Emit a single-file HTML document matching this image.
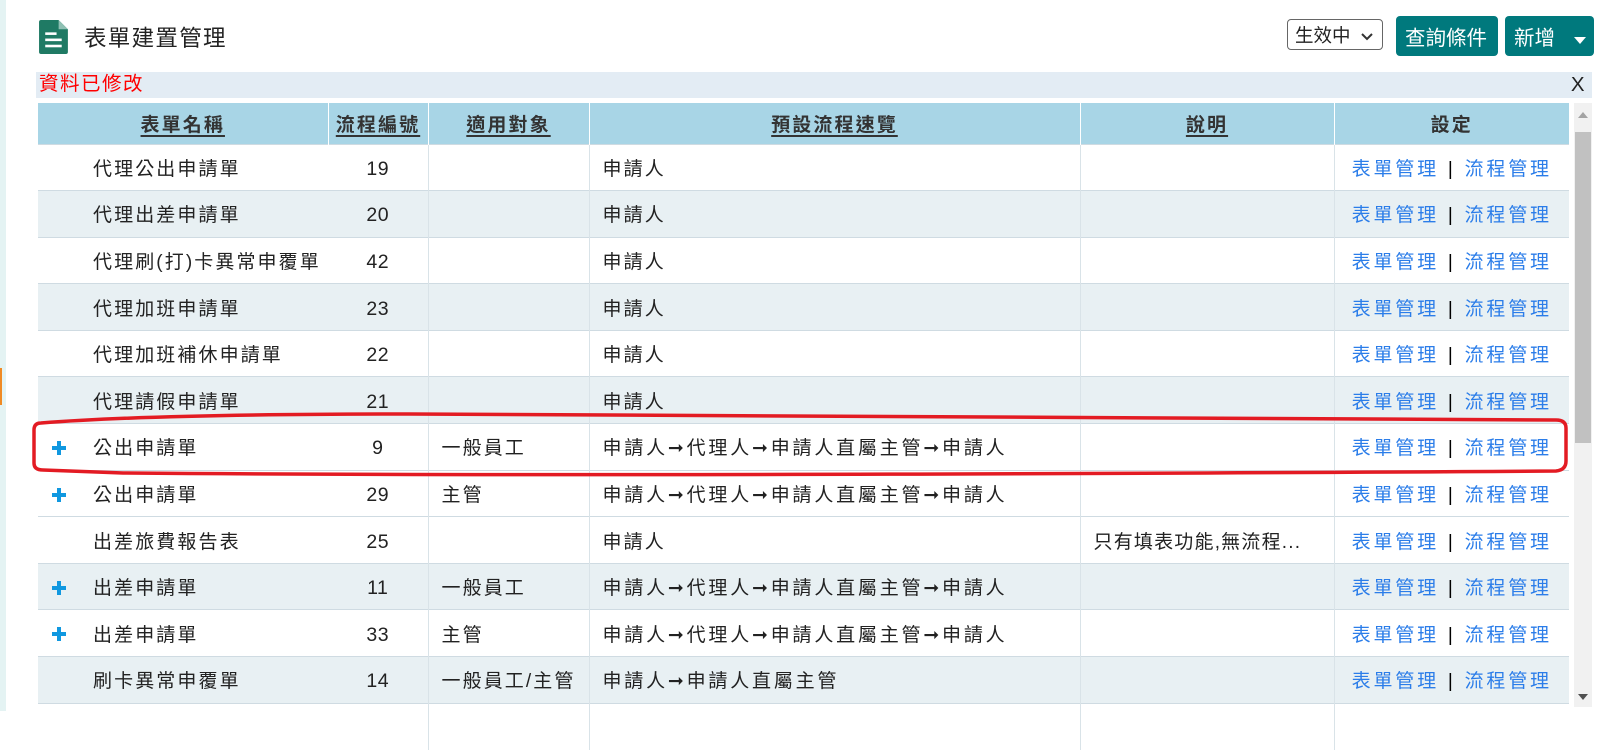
<!DOCTYPE html>
<html><head><meta charset="utf-8"><style>
*{box-sizing:border-box;margin:0;padding:0}
body{width:1605px;height:711px;overflow:hidden;background:#fff;font-family:"Liberation Sans","Noto Sans CJK TC",sans-serif;color:#222;position:relative}
.lstrip{position:absolute;left:0;top:0;width:6px;height:711px;background:#e4f3f3}
.orange{position:absolute;left:0;top:368px;width:2px;height:37px;background:#f08a24}
.title{position:absolute;left:84px;top:21px;font-size:22.5px;color:#222;letter-spacing:1.3px}
.sel{position:absolute;left:1287px;top:19px;width:96px;height:31px;border:1px solid #666;border-radius:4px;font-size:18.5px;padding:2px 0 0 7px;color:#222}
.btn{position:absolute;top:16px;height:40px;background:#00797d;color:#fff;border-radius:4px;font-size:20.5px;padding:5px 0 0 9px}
.alert{position:absolute;left:36px;top:72px;width:1556px;height:26px;background:#e3ecf4;color:#f00;font-size:19.5px;line-height:25px;padding-left:3px;letter-spacing:1.5px}
.alert span{position:absolute;right:6px;top:0;color:#222;font-size:20.5px}
table{position:absolute;left:38px;top:103px;width:1531px;border-collapse:collapse;font-size:19px;letter-spacing:2.1px;table-layout:fixed}
th{background:#a8d5e6;height:41px;font-weight:bold;color:#333;font-size:19px;border-right:1px solid #fff;white-space:nowrap;overflow:hidden}
th u{text-decoration:underline;text-decoration-thickness:2px;text-underline-offset:4px}
td{height:46.6px;border-top:1px solid #cfdbe2;border-right:1px solid #d9e3e8;padding:0 13px;white-space:nowrap;overflow:hidden}
tr.g td{background:#e8f0f3}
td.n{text-align:center;padding:4px 0 0;letter-spacing:0.5px;font-size:19.5px}
td.w{letter-spacing:2.8px}
td.f{border-right:none;padding-left:55px;position:relative}
td.f svg{position:absolute;left:14px;top:17px}
td.s{text-align:center;color:#2b7de9;border-right:none;padding:0;letter-spacing:2.8px}
td.s i{font-style:normal;color:#000;margin:0 9px}
.sb{position:absolute;left:1574px;top:103px;width:18px;height:604px;background:#f1f1f1}
.sb .th{position:absolute;left:1px;top:29px;width:16px;height:311px;background:#c1c1c1}
</style></head><body>
<div class="lstrip"></div><div class="orange"></div>
<svg style="position:absolute;left:39px;top:20px" width="31" height="34" viewBox="0 0 30 33"><path d="M0 2Q0 0 2 0H19L28 9V31Q28 33 26 33H2Q0 33 0 31Z" fill="#1f7a64"/><path d="M19 0V9H28" fill="#8fc0b3"/><rect x="6" y="12" width="11" height="2.5" fill="#fff"/><rect x="6" y="18" width="16" height="2.5" fill="#fff"/><rect x="6" y="24" width="16" height="2.5" fill="#fff"/></svg>
<div class="title">表單建置管理</div>
<div class="sel">生效中 <svg width="14" height="10" style="margin-left:4px"><path d="M2 2L7 7L12 2" stroke="#333" stroke-width="2" fill="none"/></svg></div>
<div class="btn" style="left:1396px;width:102px">查詢條件</div>
<div class="btn" style="left:1505px;width:89px">新增 <svg width="14" height="10" style="margin-left:12px"><path d="M1 2H13L7 9Z" fill="#fff"/></svg></div>
<div class="alert">資料已修改<span>X</span></div>
<table>
<colgroup><col style="width:290px"><col style="width:100px"><col style="width:161px"><col style="width:491px"><col style="width:254px"><col style="width:235px"></colgroup>
<tr><th><u>表單名稱</u></th><th><u>流程編號</u></th><th><u>適用對象</u></th><th><u>預設流程速覽</u></th><th><u>說明</u></th><th style="border-right:none">設定</th></tr>
<tr><td class="f">代理公出申請單</td><td class="n">19</td><td></td><td>申請人</td><td></td><td class="s">表單管理<i>|</i>流程管理</td></tr>
<tr class="g"><td class="f">代理出差申請單</td><td class="n">20</td><td></td><td>申請人</td><td></td><td class="s">表單管理<i>|</i>流程管理</td></tr>
<tr><td class="f">代理刷(打)卡異常申覆單</td><td class="n">42</td><td></td><td>申請人</td><td></td><td class="s">表單管理<i>|</i>流程管理</td></tr>
<tr class="g"><td class="f">代理加班申請單</td><td class="n">23</td><td></td><td>申請人</td><td></td><td class="s">表單管理<i>|</i>流程管理</td></tr>
<tr><td class="f">代理加班補休申請單</td><td class="n">22</td><td></td><td>申請人</td><td></td><td class="s">表單管理<i>|</i>流程管理</td></tr>
<tr class="g"><td class="f">代理請假申請單</td><td class="n">21</td><td></td><td>申請人</td><td></td><td class="s">表單管理<i>|</i>流程管理</td></tr>
<tr><td class="f"><svg width="14" height="14"><path d="M5 0H9V5H14V9H9V14H5V9H0V5H5Z" fill="#1098e0"/></svg>公出申請單</td><td class="n">9</td><td>一般員工</td><td class="w">申請人➞代理人➞申請人直屬主管➞申請人</td><td></td><td class="s">表單管理<i>|</i>流程管理</td></tr>
<tr><td class="f"><svg width="14" height="14"><path d="M5 0H9V5H14V9H9V14H5V9H0V5H5Z" fill="#1098e0"/></svg>公出申請單</td><td class="n">29</td><td>主管</td><td class="w">申請人➞代理人➞申請人直屬主管➞申請人</td><td></td><td class="s">表單管理<i>|</i>流程管理</td></tr>
<tr><td class="f">出差旅費報告表</td><td class="n">25</td><td></td><td>申請人</td><td style="letter-spacing:1.2px">只有填表功能,無流程...</td><td class="s">表單管理<i>|</i>流程管理</td></tr>
<tr class="g"><td class="f"><svg width="14" height="14"><path d="M5 0H9V5H14V9H9V14H5V9H0V5H5Z" fill="#1098e0"/></svg>出差申請單</td><td class="n">11</td><td>一般員工</td><td class="w">申請人➞代理人➞申請人直屬主管➞申請人</td><td></td><td class="s">表單管理<i>|</i>流程管理</td></tr>
<tr><td class="f"><svg width="14" height="14"><path d="M5 0H9V5H14V9H9V14H5V9H0V5H5Z" fill="#1098e0"/></svg>出差申請單</td><td class="n">33</td><td>主管</td><td class="w">申請人➞代理人➞申請人直屬主管➞申請人</td><td></td><td class="s">表單管理<i>|</i>流程管理</td></tr>
<tr class="g"><td class="f">刷卡異常申覆單</td><td class="n">14</td><td>一般員工/主管</td><td class="w">申請人➞申請人直屬主管</td><td></td><td class="s">表單管理<i>|</i>流程管理</td></tr>
<tr><td class="f">&nbsp;</td><td></td><td></td><td></td><td></td><td class="s"></td></tr>
</table>
<div class="sb"><svg style="position:absolute;left:3px;top:8px" width="12" height="8"><path d="M1 7L6 1L11 7Z" fill="#a3a3a3"/></svg><div class="th"></div><svg style="position:absolute;left:3px;top:590px" width="12" height="8"><path d="M1 1L6 7L11 1Z" fill="#505050"/></svg></div>
<svg style="position:absolute;left:0;top:0" width="1605" height="711"><path d="M41 423Q34 423 34 430V463Q34 470 43 470L123 473Q614 477 1556 471Q1566 470 1566 461V428Q1566 420 1556 420L409 414Q154 414 41 423Z" fill="none" stroke="#e31b23" stroke-width="3.5"/></svg>
</body></html>
